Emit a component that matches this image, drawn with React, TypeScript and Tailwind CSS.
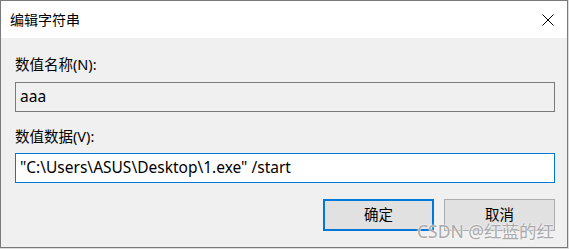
const ui = { fontFamily: '"Noto Sans", "Noto Sans CJK SC", sans-serif' }

export default function App() {
  return (
    <div className="w-[569px] h-[249px] bg-[#dcdcdc] relative" style={ui}>
      <div className="w-[568px] h-[248px] border border-[#7a7a7a] bg-[#f0f0f0] flex flex-col">
        <div className="h-[37px] bg-white flex items-center justify-between pl-[9px] pr-[13px] shrink-0">
          <span className="text-[14px] text-black leading-none">编辑字符串</span>
          <svg width="12" height="12" viewBox="0 0 12 12" className="block">
            <path d="M0.5 0.5 L11.5 11.5 M11.5 0.5 L0.5 11.5" stroke="#000" strokeWidth="1" />
          </svg>
        </div>

        <div className="pl-[14px] pr-[12px] pt-[16px] flex flex-col">
          <label className="h-[20px] leading-[20px] text-[14.5px] text-black">数值名称(N):</label>
          <div className="mt-[8px] h-[30px] border border-[#7a7a7a] bg-[#f0f0f0] flex items-center px-[4px] text-[15.5px] text-black">
            aaa
          </div>

          <label className="mt-[14px] h-[20px] leading-[20px] text-[14.5px] text-black">数值数据(V):</label>
          <div className="mt-[7px] h-[30px] border border-[#0078d7] bg-white flex items-center px-[4px] text-[15.5px] text-black whitespace-pre">
            "C:\Users\ASUS\Desktop\1.exe" /start
          </div>

          <div className="mt-[16px] flex justify-end gap-[10px]">
            <button className="w-[111px] h-[32px] border-2 border-[#0078d7] bg-[#e1e1e1] text-[14.5px] text-black leading-none pb-[2px]">
              确定
            </button>
            <button className="w-[111px] h-[32px] border border-[#adadad] bg-[#e1e1e1] text-[14.5px] text-black leading-none pb-[2px]">
              取消
            </button>
          </div>
        </div>
      </div>

      <span
        className="absolute left-[417px] top-[223px] text-[17.5px] leading-[17px] text-[#a9a9a9] whitespace-nowrap pointer-events-none"
        style={{ textShadow: '0 0 2px #fff, 0 0 1px #fff' }}
      >
        CSDN @红蓝的红
      </span>
    </div>
  )
}
